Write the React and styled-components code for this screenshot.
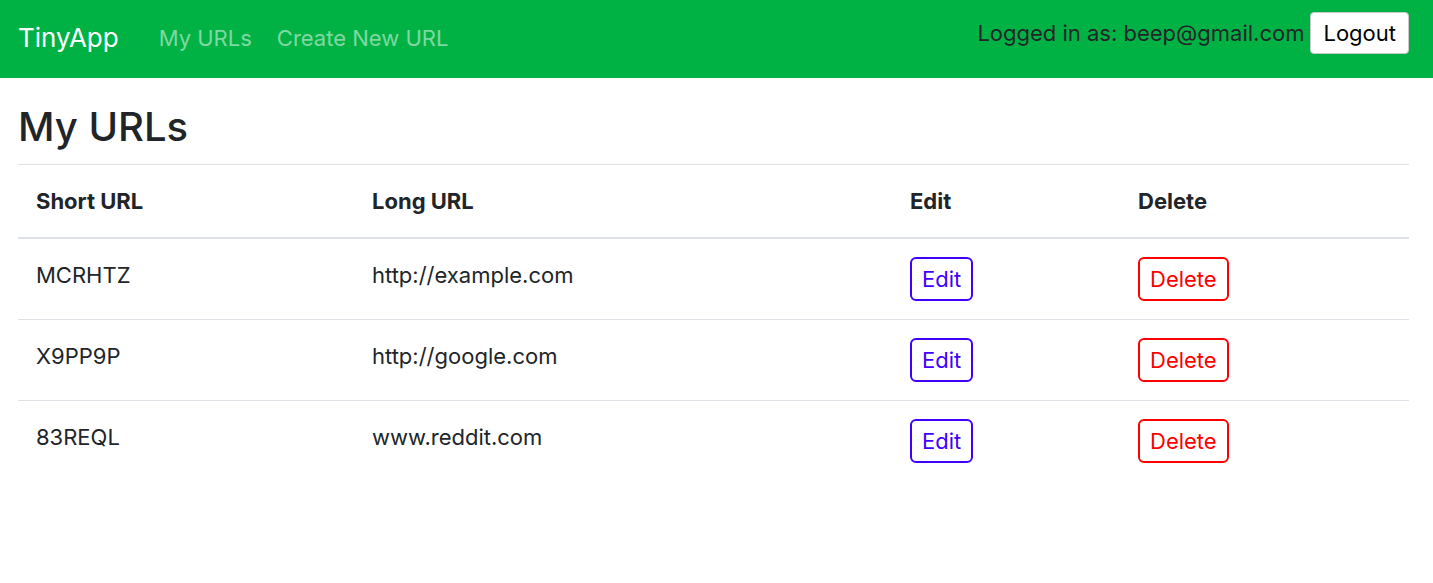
import React from "react";
import styled, { createGlobalStyle } from "styled-components";

const GlobalStyle = createGlobalStyle`
  body {
    margin: 0;
    font-family: Inter, "Noto Sans", sans-serif;
    color: #212529;
    background: #fff;
  }
`;

const Navbar = styled.nav`
  display: flex;
  align-items: center;
  height: 78px;
  padding: 0 24px 0 18px;
  background-color: #00b244;
  box-sizing: border-box;
`;

const Brand = styled.a`
  font-size: 26px;
  color: #fff;
  text-decoration: none;
  margin-right: 40px;
  margin-top: -4px;
`;

const NavLinks = styled.div`
  display: flex;
  gap: 25px;
  margin-top: -3px;
`;

const NavLink = styled.a`
  font-size: 22px;
  color: rgba(255, 255, 255, 0.5);
  text-decoration: none;
`;

const UserArea = styled.div`
  margin-left: auto;
  display: flex;
  align-items: center;
  gap: 6px;
  margin-top: -13px;
  font-size: 22px;
  color: #212529;
`;

const LogoutButton = styled.button`
  height: 42px;
  padding: 0 12px;
  font-family: inherit;
  font-size: 22px;
  color: #000;
  background: #fff;
  border: 1px solid #c9c9c9;
  border-radius: 4px;
`;

const Main = styled.main`
  padding: 0 24px 0 18px;
`;

const Title = styled.h1`
  margin: 24px 0 12px;
  font-size: 40px;
  font-weight: 500;
  line-height: 50px;
`;

const Table = styled.table`
  width: 100%;
  border-collapse: collapse;
  table-layout: fixed;
  font-size: 22px;
`;

const Th = styled.th`
  text-align: left;
  font-weight: 700;
  line-height: 33px;
  padding: 20px 18px 19px;
  border-top: 1px solid #dee2e6;
  border-bottom: 2px solid #dee2e6;
`;

const Td = styled.td`
  vertical-align: top;
  line-height: 36px;
  padding: 18px;
  border-top: 1px solid #dee2e6;
`;

const ActionButton = styled.button`
  height: 44px;
  padding: 0 10px;
  font-family: inherit;
  font-size: 22px;
  background: #fff;
  color: ${(p) => p.$color};
  border: 2px solid ${(p) => p.$color};
  border-radius: 6px;
`;

const urls = [
  { id: "MCRHTZ", long: "http://example.com" },
  { id: "X9PP9P", long: "http://google.com" },
  { id: "83REQL", long: "www.reddit.com" },
];

export default function App() {
  return (
    <>
      <GlobalStyle />
      <Navbar>
        <Brand href="#">TinyApp</Brand>
        <NavLinks>
          <NavLink href="#">My URLs</NavLink>
          <NavLink href="#">Create New URL</NavLink>
        </NavLinks>
        <UserArea>
          <span>Logged in as: beep@gmail.com</span>
          <LogoutButton>Logout</LogoutButton>
        </UserArea>
      </Navbar>
      <Main>
        <Title>My URLs</Title>
        <Table>
          <colgroup>
            <col style={{ width: 336 }} />
            <col style={{ width: 538 }} />
            <col style={{ width: 228 }} />
            <col />
          </colgroup>
          <thead>
            <tr>
              <Th>Short URL</Th>
              <Th>Long URL</Th>
              <Th>Edit</Th>
              <Th>Delete</Th>
            </tr>
          </thead>
          <tbody>
            {urls.map((u) => (
              <tr key={u.id}>
                <Td>{u.id}</Td>
                <Td>{u.long}</Td>
                <Td>
                  <ActionButton $color="#3f00ff">Edit</ActionButton>
                </Td>
                <Td>
                  <ActionButton $color="#ff0000">Delete</ActionButton>
                </Td>
              </tr>
            ))}
          </tbody>
        </Table>
      </Main>
    </>
  );
}
